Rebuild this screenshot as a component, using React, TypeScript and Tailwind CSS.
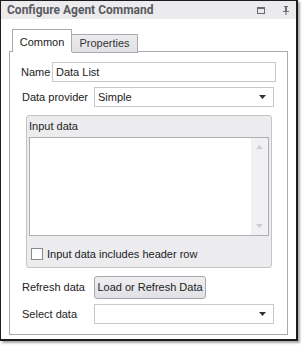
import { memo } from 'react';

const font = { fontFamily: '"Liberation Sans", Arial, sans-serif' };
const titleFont = { fontFamily: 'Roboto, "Liberation Sans", sans-serif' };

const DropArrow = () => (
    <svg className="w-[7px] h-[4px]" viewBox="0 0 7 4">
        <path d="M0 0h7L3.5 4z" fill="#333" />
    </svg>
);

const Select = ({ value, width }: { value?: string; width: string }) => (
    <div className={`${width} h-[20px] border border-[#c8c8cc] bg-white flex items-center pl-[3px] pr-[7px]`}>
        <span className="flex-1 text-[#222]">{value}</span>
        <DropArrow />
    </div>
);

const ConfigureAgentCommand = () => {
    return (
        <div className="w-[302px] h-[345px] bg-white text-[11px] leading-none" style={font}>
            <div className="w-[298px] h-[341px] border-l border-t border-r-2 border-b-2 border-[#1c1c1c] shadow-[2px_2px_2px_rgba(0,0,0,0.35)] flex flex-col bg-white">
                {/* Title bar */}
                <div className="h-[18px] bg-[#ebebee] flex items-center pl-[6px] pr-[7px]">
                    <span className="flex-1 font-bold text-[12px] text-[#5a5a5e]" style={titleFont}>Configure Agent Command</span>
                    <svg className="w-[8px] h-[7px] mr-[18px]" viewBox="0 0 8 7">
                        <rect x="0.5" y="0.5" width="7" height="6" fill="none" stroke="#6b6b70" />
                        <rect x="0" y="0" width="8" height="2" fill="#6b6b70" />
                    </svg>
                    <svg className="w-[6px] h-[9px]" viewBox="0 0 6 9">
                        <path d="M1 0h4v1H4v4h2v1H3.5v3h-1V6H0V5h2V1H1z" fill="#6b6b70" />
                        <rect x="3" y="1" width="1" height="4" fill="#6b6b70" />
                    </svg>
                </div>

                <div className="flex-1 pl-[8px] pr-[8px] pt-[10px] pb-[4px] flex flex-col">
                    {/* Tabs */}
                    <div className="flex items-end pl-[3px] h-[23px] relative z-10">
                        <div className="w-[60px] h-[23px] border border-b-0 border-[#a9a9ae] bg-white flex items-center justify-center text-[#222] pt-[2px]">
                            Common
                        </div>
                        <div className="w-[66px] h-[19px] -mb-px border border-l-0 border-[#a9a9ae] bg-gradient-to-b from-[#ececef] to-[#e2e2e6] flex items-center justify-center text-[#333]">
                            Properties
                        </div>
                    </div>

                    {/* Tab page */}
                    <div className="flex-1 -mt-px border border-[#a9a9ae] pl-[11px] pr-[11px] pt-[10px] flex flex-col text-[#222]">
                        <div className="flex items-center h-[20px]">
                            <span className="w-[31px]">Name</span>
                            <div className="w-[224px] h-[20px] border border-[#c8c8cc] flex items-center pl-[3px]">Data List</div>
                        </div>

                        <div className="flex items-center h-[20px] mt-[5px]">
                            <span className="w-[73px] pl-px">Data provider</span>
                            <Select value="Simple" width="w-[180px]" />
                        </div>

                        {/* Group box */}
                        <div className="mt-[8px] ml-[5px] w-[246px] h-[153px] border border-[#c4c4c8] rounded-[3px] bg-[#ececef] flex flex-col">
                            <div className="h-[21px] flex items-center pl-[2px] text-[#222]">Input data</div>
                            <div className="mx-[2px] h-[99px] border border-[#aeaeb3] bg-white flex">
                                <div className="flex-1" />
                                <div className="w-[17px] bg-[#f1f1f3] flex flex-col items-center justify-between py-[7px]">
                                    <svg className="w-[7px] h-[4px]" viewBox="0 0 7 4">
                                        <path d="M0 4h7L3.5 0z" fill="#cfcfd3" />
                                    </svg>
                                    <svg className="w-[7px] h-[4px]" viewBox="0 0 7 4">
                                        <path d="M0 0h7L3.5 4z" fill="#cfcfd3" />
                                    </svg>
                                </div>
                            </div>
                            <div className="flex items-center mt-[12px] pl-[4px]">
                                <span className="w-[12px] h-[12px] border border-[#8a8a8f] bg-white mr-[4px]" />
                                <span>Input data includes header row</span>
                            </div>
                        </div>

                        <div className="flex items-center h-[23px] mt-[8px]">
                            <span className="w-[73px] pl-px">Refresh data</span>
                            <button className="w-[112px] h-[23px] border border-[#a6a6ac] rounded-[3px] bg-gradient-to-b from-[#f0f0f3] to-[#e0e0e5] text-[#222] text-[11px]">
                                Load or Refresh Data
                            </button>
                        </div>

                        <div className="flex items-center h-[20px] mt-[5px]">
                            <span className="w-[73px] pl-px">Select data</span>
                            <Select width="w-[180px]" />
                        </div>
                    </div>
                </div>
            </div>
        </div>
    );
};

export default memo(ConfigureAgentCommand);
